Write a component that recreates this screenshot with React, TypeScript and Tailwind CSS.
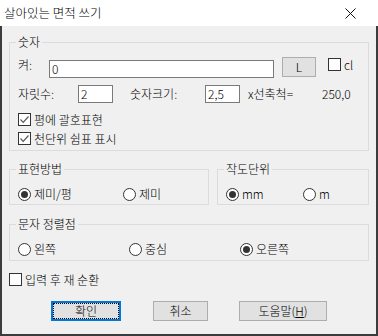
import type { ReactNode } from 'react';

function CheckBox({ checked }: { checked?: boolean }) {
  return (
    <span className="flex h-[13px] w-[13px] shrink-0 items-center justify-center border border-[#333333] bg-white">
      {checked && (
        <svg width="11" height="11" viewBox="0 0 11 11" fill="none" aria-hidden="true">
          <polyline points="1.5,5.5 4.2,8.3 9.5,2.5" stroke="#5a5a5a" strokeWidth="1.2" />
        </svg>
      )}
    </span>
  );
}

function Radio({ checked }: { checked?: boolean }) {
  return (
    <span className="flex h-[13px] w-[13px] shrink-0 items-center justify-center rounded-full border border-[#333333] bg-white">
      {checked && <span className="h-[7px] w-[7px] rounded-full bg-[#333333]" />}
    </span>
  );
}

function RadioItem({ label, checked, className = '' }: { label: string; checked?: boolean; className?: string }) {
  return (
    <div className={`flex items-center ${className}`}>
      <Radio checked={checked} />
      <span className="ml-[3px] leading-[14px]">{label}</span>
    </div>
  );
}

function CheckItem({ label, checked, className = '' }: { label: string; checked?: boolean; className?: string }) {
  return (
    <div className={`flex h-[13px] items-center ${className}`}>
      <CheckBox checked={checked} />
      <span className="ml-[3px] leading-[14px]">{label}</span>
    </div>
  );
}

function Group({ title, className = '', children }: { title: string; className?: string; children: ReactNode }) {
  return (
    <fieldset className={`border border-[#dcdcdc] px-[8px] ${className}`}>
      <legend className="-ml-[2px] px-[2px] leading-[14px]">{title}</legend>
      {children}
    </fieldset>
  );
}

function TextBox({ value, className = '' }: { value: string; className?: string }) {
  return (
    <div className={`flex h-[18px] items-center border border-[#7a7a7a] bg-white px-[2px] leading-[14px] ${className}`}>
      {value}
    </div>
  );
}

export default function App() {
  return (
    <div className="flex h-[336px] w-[378px] flex-col font-['Noto_Sans_CJK_KR','Noto_Sans',sans-serif] text-[12px] font-light text-black">
      <div className="flex h-[26px] shrink-0 items-center justify-between bg-white pl-[4px] pr-[22px]">
        <span className="text-[12.5px] leading-[16px]">살아있는 면적 쓰기</span>
        <svg width="11" height="11" viewBox="0 0 11 11" aria-hidden="true">
          <path d="M0.5 0.5 L10.5 10.5 M10.5 0.5 L0.5 10.5" stroke="#111111" strokeWidth="1" />
        </svg>
      </div>

      <div className="flex flex-1 flex-col border-x-2 border-b-2 border-[#3c3c3c] bg-[#f0f0f0] px-[7px] pt-[9px]">
        <Group title="숫자" className="h-[116px]">
          <div className="mt-[8px] flex h-[20px] items-start">
            <span className="mt-[1px] w-[31px] leading-[14px]">켜:</span>
            <TextBox value="0" className="mt-[3px] w-[225px]" />
            <button
              type="button"
              className="ml-[8px] flex h-[20px] w-[34px] items-center justify-center border border-[#adadad] bg-[#e1e1e1] leading-[14px]"
            >
              L
            </button>
            <CheckItem label="cl" className="ml-[12px] mt-[1px]" />
          </div>

          <div className="mt-[8px] flex h-[18px] items-center">
            <span className="w-[60px] leading-[14px]">자릿수:</span>
            <TextBox value="2" className="w-[35px]" />
            <span className="ml-[17px] w-[75px] leading-[14px]">숫자크기:</span>
            <TextBox value="2,5" className="w-[35px]" />
            <span className="ml-[8px] w-[74px] leading-[14px]">x선축척=</span>
            <span className="leading-[14px]">250,0</span>
          </div>

          <CheckItem label="평에 괄호표현" checked className="mt-[10px]" />
          <CheckItem label="천단위 쉼표 표시" checked className="mt-[6px]" />
        </Group>

        <div className="mt-[11px] flex gap-[8px]">
          <Group title="표현방법" className="h-[43px] w-[200px]">
            <div className="mt-[11px] flex">
              <RadioItem label="제미/평" checked className="w-[105px]" />
              <RadioItem label="제미" />
            </div>
          </Group>
          <Group title="작도단위" className="h-[43px] w-[152px]">
            <div className="mt-[11px] flex">
              <RadioItem label="mm" checked className="w-[77px]" />
              <RadioItem label="m" />
            </div>
          </Group>
        </div>

        <Group title="문자 정렬점" className="mt-[12px] h-[44px]">
          <div className="mt-[11px] flex">
            <RadioItem label="왼쪽" className="w-[111px]" />
            <RadioItem label="중심" className="w-[111px]" />
            <RadioItem label="오른쪽" checked />
          </div>
        </Group>

        <CheckItem label="입력 후 재 순환" className="mt-[12px]" />

        <div className="ml-[42px] mt-[15px] flex items-start">
          <button type="button" className="h-[20px] w-[70px] border-2 border-[#0078d7] bg-[#e1e1e1] p-0">
            <span className="flex h-full w-full items-center justify-center border border-dotted border-black leading-[14px]">
              확인
            </span>
          </button>
          <button
            type="button"
            className="ml-[32px] flex h-[20px] w-[55px] items-center justify-center border border-[#adadad] bg-[#e1e1e1] leading-[14px]"
          >
            취소
          </button>
          <button
            type="button"
            className="ml-[31px] flex h-[20px] w-[88px] items-center justify-center border border-[#adadad] bg-[#e1e1e1] leading-[14px]"
          >
            도움말(<u>H</u>)
          </button>
        </div>
      </div>
    </div>
  );
}
